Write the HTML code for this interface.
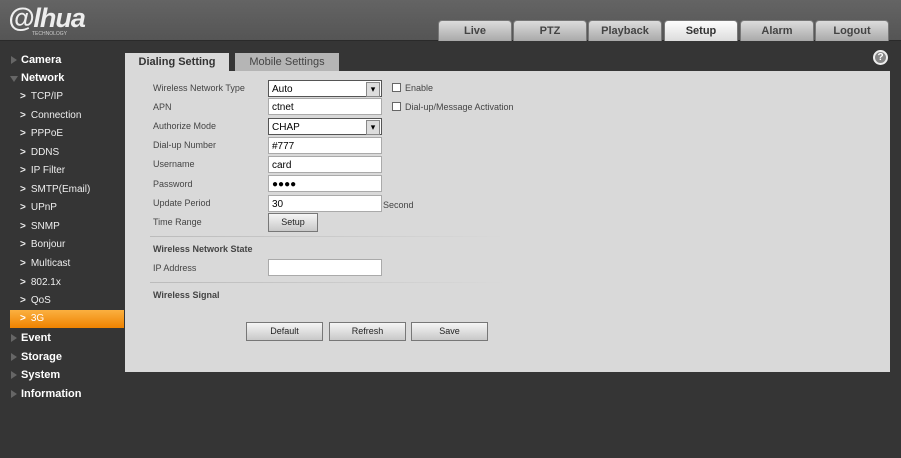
<!DOCTYPE html>
<html><head><meta charset="utf-8"><style>
*{margin:0;padding:0;box-sizing:border-box}
body{width:901px;height:458px;background:#353535;font-family:"Liberation Sans",Arial,sans-serif;position:relative;overflow:hidden}
.hdr{position:absolute;left:0;top:0;width:901px;height:41px;background:linear-gradient(#646464,#555);border-bottom:1px solid #2a2a2a}
.logo{position:absolute;left:8px;top:3px;color:#eee;font:italic bold 27px "Liberation Sans",sans-serif;letter-spacing:-1px}
.logo small{position:absolute;left:24px;top:28px;font:normal 5px sans-serif;color:#ccc;letter-spacing:0}
.nt{position:absolute;top:20px;height:21px;width:74px;border-radius:4px 4px 0 0;background:linear-gradient(#dcdcdc,#a9a9a9);border:1px solid #777;border-bottom:none;font:bold 11px "Liberation Sans",sans-serif;color:#444;text-align:center;line-height:20px}
.nt.on{background:linear-gradient(#fdfdfd,#dcdcdc);color:#333}
.side div{position:absolute;left:0;width:124px;color:#eee;font-size:10px;height:18px;line-height:18px}
.side .m{font-weight:bold;font-size:11px;padding-left:21px;color:#fff}
.side .m:before{content:"";position:absolute;left:11px;top:5px;border-left:6px solid #666;border-top:4px solid transparent;border-bottom:4px solid transparent}
.side .m.open:before{left:10px;top:7px;border-top:6px solid #666;border-left:4px solid transparent;border-right:4px solid transparent;border-bottom:none}
.side .s{padding-left:20px}
.side .s b{font-weight:bold;margin-right:5px}
.side .sel{left:10px;width:114px;padding-left:10px;background:linear-gradient(#fbb040,#ee8200);color:#fff}
.panel{position:absolute;left:125px;top:71px;width:765px;height:301px;background:#d9d9d9}
.tab{position:absolute;top:53px;height:18px;font-size:11px;text-align:center;line-height:18px}
.lbl{position:absolute;left:153px;font-size:9px;color:#444}
.inp{position:absolute;left:268px;width:114px;height:17px;background:#fff;border:1px solid #aaa;font-size:10px;padding-left:3px;line-height:17px;color:#000}
.sel2{border:1px solid #555}
.sel2:after{content:"▾";position:absolute;right:1px;top:1px;width:12px;height:13px;background:#ddd;border:1px solid #888;font-size:9px;line-height:12px;text-align:center}
.cb{position:absolute;font-size:9px;color:#444}
.cb i{display:inline-block;width:9px;height:9px;border:1px solid #666;background:#fff;margin-right:4px;vertical-align:-1px}
.btn{position:absolute;height:19px;border:1px solid #777;background:linear-gradient(#f5f5f5,#c8c8c8);font-size:9px;text-align:center;line-height:17px;color:#222}
.sep{position:absolute;left:150px;width:355px;height:1px;background:linear-gradient(90deg,#bbb,#d9d9d9)}
.h{position:absolute;left:153px;font-size:9px;font-weight:bold;color:#444}
</style></head><body>
<div class="hdr"><div class="logo">@lhua<small>TECHNOLOGY</small></div>
<div class="nt" style="left:438px">Live</div><div class="nt" style="left:513px">PTZ</div><div class="nt" style="left:588px">Playback</div><div class="nt on" style="left:664px">Setup</div><div class="nt" style="left:740px">Alarm</div><div class="nt" style="left:815px">Logout</div></div>
<div class="side">
<div class="m" style="top:51px">Camera</div>
<div class="m open" style="top:69px">Network</div>
<div class="s" style="top:88px"><b>&gt;</b>TCP/IP</div>
<div class="s" style="top:107px"><b>&gt;</b>Connection</div>
<div class="s" style="top:125px"><b>&gt;</b>PPPoE</div>
<div class="s" style="top:144px"><b>&gt;</b>DDNS</div>
<div class="s" style="top:162px"><b>&gt;</b>IP Filter</div>
<div class="s" style="top:181px"><b>&gt;</b>SMTP(Email)</div>
<div class="s" style="top:199px"><b>&gt;</b>UPnP</div>
<div class="s" style="top:218px"><b>&gt;</b>SNMP</div>
<div class="s" style="top:236px"><b>&gt;</b>Bonjour</div>
<div class="s" style="top:255px"><b>&gt;</b>Multicast</div>
<div class="s" style="top:274px"><b>&gt;</b>802.1x</div>
<div class="s" style="top:292px"><b>&gt;</b>QoS</div>
<div class="s sel" style="top:310px"><b>&gt;</b>3G</div>
<div class="m" style="top:329px">Event</div>
<div class="m" style="top:348px">Storage</div>
<div class="m" style="top:366px">System</div>
<div class="m" style="top:385px">Information</div>
</div>
<div class="tab" style="left:125px;width:104px;background:#d9d9d9;font-weight:bold;color:#333">Dialing Setting</div>
<div class="tab" style="left:235px;width:104px;background:#b5b5b5;color:#444">Mobile Settings</div>
<div style="position:absolute;left:873px;top:50px;width:15px;height:15px;border-radius:50%;background:#888;border:2px solid #eee;color:#fff;font:bold 10px sans-serif;text-align:center;line-height:11px">?</div>
<div class="panel"></div>
<div class="lbl" style="top:83px">Wireless Network Type</div><div class="inp sel2" style="top:80px">Auto</div>
<div class="cb" style="left:392px;top:83px"><i></i>Enable</div>
<div class="lbl" style="top:102px">APN</div><div class="inp" style="top:98px">ctnet</div>
<div class="cb" style="left:392px;top:102px"><i></i>Dial-up/Message Activation</div>
<div class="lbl" style="top:121px">Authorize Mode</div><div class="inp sel2" style="top:118px">CHAP</div>
<div class="lbl" style="top:140px">Dial-up Number</div><div class="inp" style="top:137px">#777</div>
<div class="lbl" style="top:159px">Username</div><div class="inp" style="top:156px">card</div>
<div class="lbl" style="top:179px">Password</div><div class="inp" style="top:175px">●●●●</div>
<div class="lbl" style="top:198px">Update Period</div><div class="inp" style="top:195px">30</div>
<div class="lbl" style="left:383px;top:200px">Second</div>
<div class="lbl" style="top:217px">Time Range</div><div class="btn" style="left:268px;top:213px;width:50px">Setup</div>
<div class="sep" style="top:236px"></div>
<div class="h" style="top:244px">Wireless Network State</div>
<div class="lbl" style="top:263px">IP Address</div><div class="inp" style="top:259px"></div>
<div class="sep" style="top:282px"></div>
<div class="h" style="top:290px">Wireless Signal</div>
<div class="btn" style="left:246px;top:322px;width:77px">Default</div>
<div class="btn" style="left:329px;top:322px;width:77px">Refresh</div>
<div class="btn" style="left:411px;top:322px;width:77px">Save</div>
</body></html>
